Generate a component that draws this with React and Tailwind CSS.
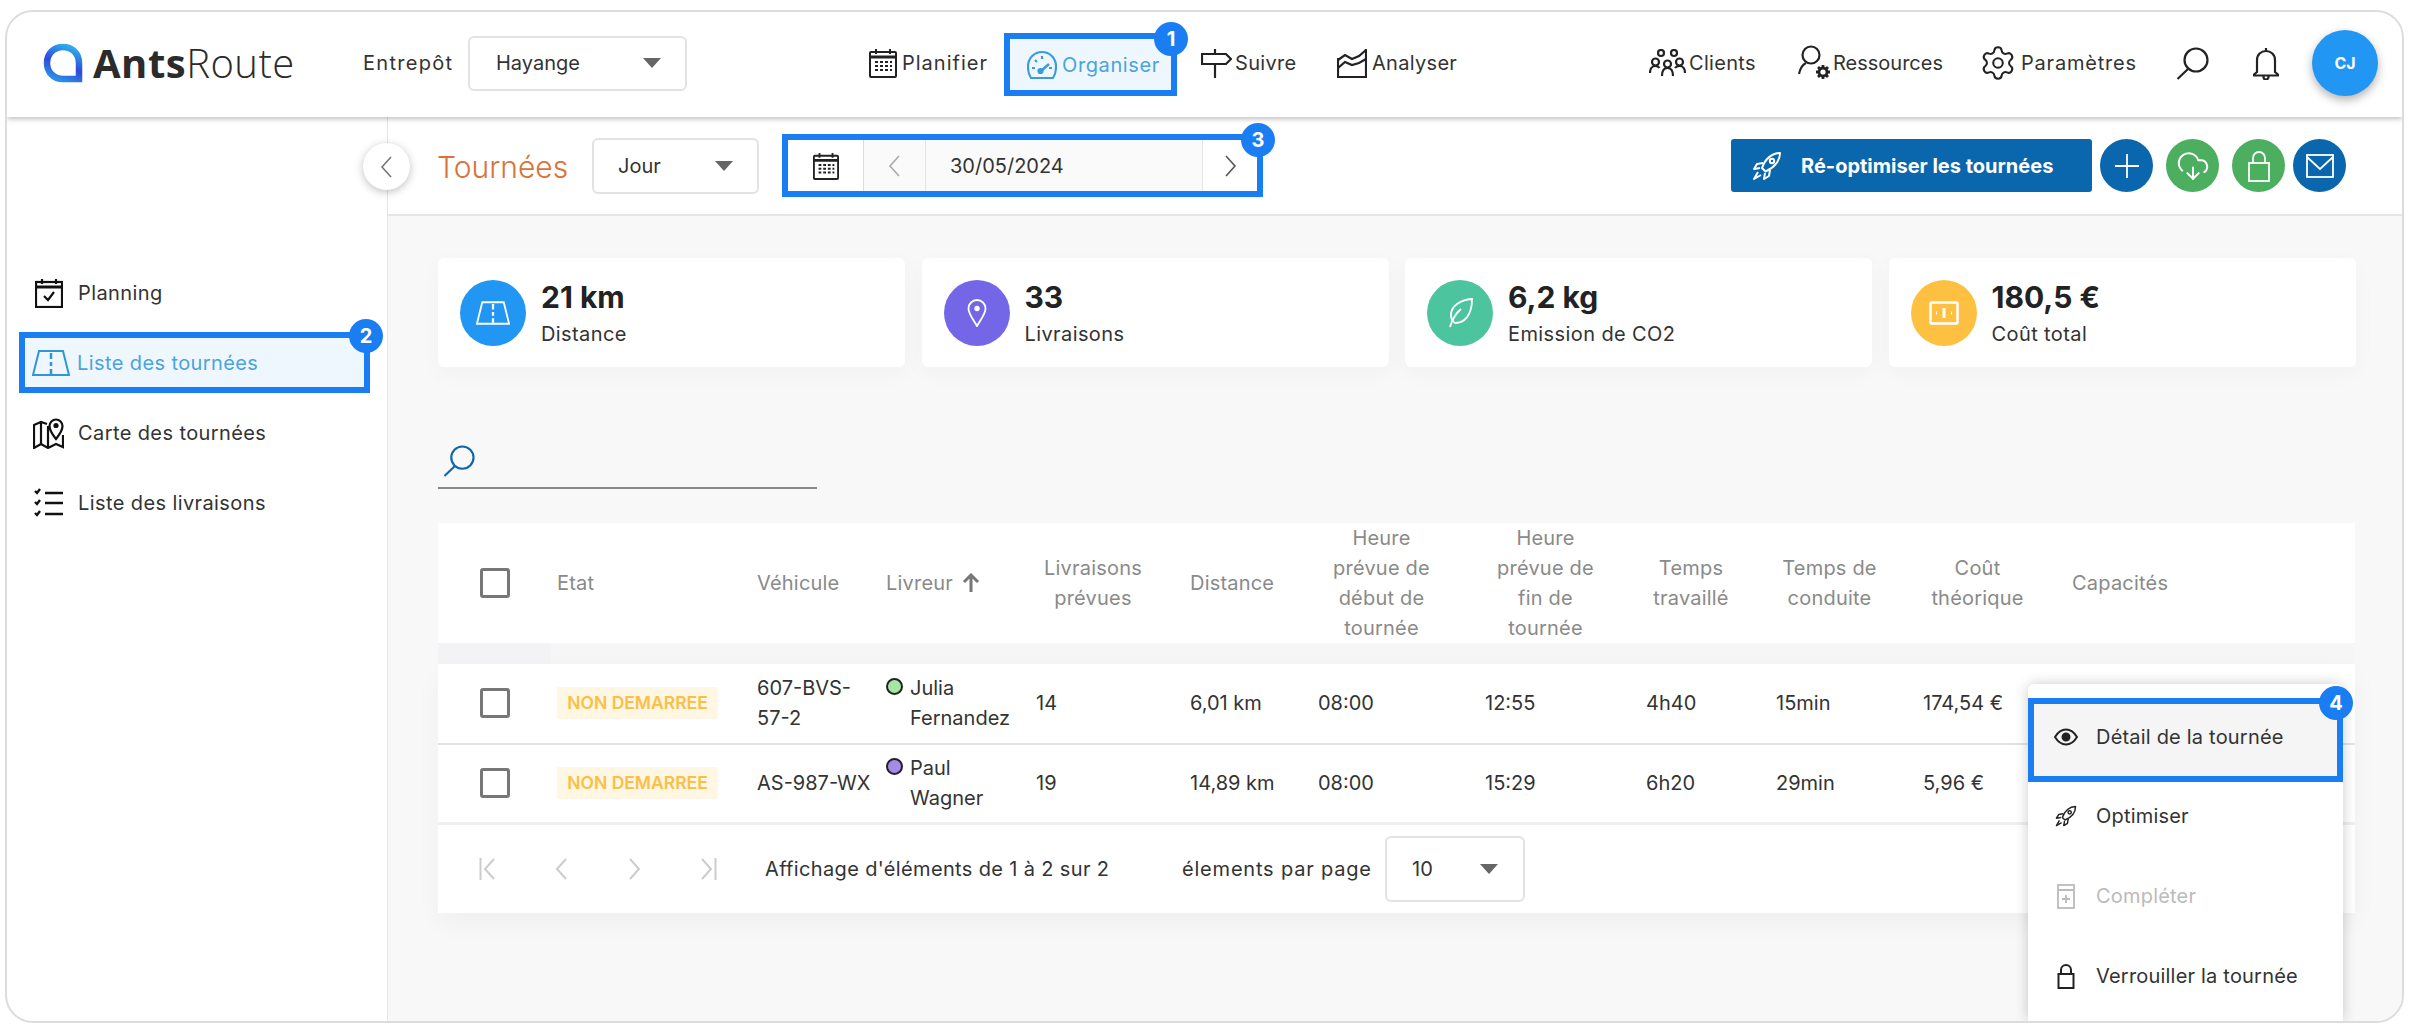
import { CloudDownload, Settings } from "lucide-react";

const FONT = "font-['Inter','Liberation_Sans',sans-serif]";
const COLS =
  "grid grid-cols-[119px_200px_129px_150px_154px_128px_167px_161px_130px_147px_149px_1fr]";

function Arrow() {
  return (
    <div className="w-0 h-0 border-x-[9px] border-x-transparent border-t-[10px] border-t-[#666]" />
  );
}

function Badge({ n, className }) {
  return (
    <div
      className={`absolute w-[34px] h-[34px] rounded-full bg-[#1a7ef2] text-white text-[20px] font-bold flex items-center justify-center z-20 ${className}`}
    >
      {n}
    </div>
  );
}

function Logo() {
  return (
    <svg width="40" height="40" viewBox="0 0 40 40" fill="none">
      <defs>
        <linearGradient id="lg" x1="0.7" y1="0" x2="0.3" y2="1">
          <stop offset="0" stopColor="#2fa8ea" />
          <stop offset="0.55" stopColor="#3048dc" />
          <stop offset="1" stopColor="#2a8fe8" />
        </linearGradient>
      </defs>
      <path
        d="M36 36H20C10.500 36 4 29 4 20C4 10.500 11 4 20 4C29 4 36 10.500 36 20Z"
        stroke="url(#lg)"
        strokeWidth="6.500"
      />
    </svg>
  );
}

function CalendarIcon({ w = 28, h = 30 }) {
  return (
    <svg width={w} height={h} viewBox="0 0 28 30" fill="none" stroke="#222" strokeWidth="2">
      <rect x="1" y="4" width="26" height="25" rx="1" />
      <path d="M1 9h26" strokeWidth="3" />
      <path d="M7 1v5M21 1v5" />
      <path
        d="M6 14h3M11 14h3M16 14h3M21 14h2M6 18h3M11 18h3M16 18h3M21 18h2M6 22h3M11 22h3M16 22h3M21 22h2"
        strokeWidth="2.200"
      />
    </svg>
  );
}

function GaugeIcon() {
  return (
    <svg width="30" height="30" viewBox="0 0 30 30" fill="none" stroke="#3b9bdd" strokeWidth="2.200">
      <path d="M4 28C2 25 1 21 1 16.500C1 8 7.500 2 15 2C22.500 2 29 8 29 16.500C29 21 28 25 26 28Z" />
      <path d="M15 6v3M8 10l2 2M5 18h3M25 18h-3" />
      <path d="M14 21l8-7" strokeWidth="2.500" />
      <circle cx="13.500" cy="21" r="2" fill="#3b9bdd" />
    </svg>
  );
}

function SignIcon() {
  return (
    <svg width="31" height="30" viewBox="0 0 31 30" fill="none" stroke="#222" strokeWidth="2.200">
      <path d="M14 1v5M14 16v14" />
      <path d="M1 6h24l5 5-5 5H1z" />
    </svg>
  );
}

function ChartIcon() {
  return (
    <svg width="30" height="30" viewBox="0 0 30 30" fill="none" stroke="#222" strokeWidth="2.200">
      <path d="M1 10v19h28V1" />
      <path d="M1 12l7-5 7 4 7-3 7-6" />
      <path d="M1 20l7-6 7 3 7-2 7-4" />
    </svg>
  );
}

function ClientsIcon() {
  return (
    <svg width="37" height="28" viewBox="0 0 37 28" fill="none" stroke="#222" strokeWidth="2.200">
      <circle cx="12" cy="4" r="3" />
      <circle cx="25" cy="4" r="3" />
      <circle cx="6.500" cy="13" r="3.500" />
      <circle cx="18.500" cy="15" r="3.500" />
      <circle cx="30.500" cy="13" r="3.500" />
      <path d="M1 24c0-4 2-7 5.500-7 1.500 0 3 .5 4 2M13 27c0-5 2-8 5.500-8s5.500 3 5.500 8M26 19c1-1.500 3-2 4.500-2 3.500 0 5.500 3 5.500 7" />
    </svg>
  );
}

function ResourceIcon() {
  return (
    <svg width="35" height="36" viewBox="0 0 35 36" fill="none" stroke="#222" strokeWidth="2.200">
      <circle cx="13" cy="10" r="8.500" />
      <path d="M8 18C4 20 2 24 1 29" />
      <circle cx="25" cy="27" r="4" strokeWidth="2.800" />
      <path d="M25 20v3M25 31v3M18 27h3M29 27h3M20 22l2 2M28 30l2 2M30 22l-2 2M22 30l-2 2" strokeWidth="2.800" />
    </svg>
  );
}

function SearchIcon({ color = "#222", size = 33 }) {
  return (
    <svg width={size} height={size} viewBox="0 0 33 33" fill="none" stroke={color} strokeWidth="2.200">
      <circle cx="20" cy="13" r="11.500" />
      <path d="M12 22L1.500 32" />
    </svg>
  );
}

function BellIcon() {
  return (
    <svg width="26" height="33" viewBox="0 0 26 33" fill="none" stroke="#222" strokeWidth="2.200">
      <path d="M13 1v3" />
      <path d="M4 25V13C4 7.500 8 4 13 4s9 3.500 9 9v12l3 2.500v1H1v-1z" />
      <path d="M10.500 29v1a2.500 2.500 0 0 0 5 0v-1" />
    </svg>
  );
}

function RocketIcon({ color = "#fff", size = 30 }) {
  return (
    <svg width={size} height={size} viewBox="0 0 30 30" fill="none" stroke={color} strokeWidth="2" strokeLinejoin="round">
      <path d="M28 2C20 2 13 8 10 17l3.500 3.500C22 17 28 10 28 2z" />
      <circle cx="20" cy="10" r="2.200" />
      <path d="M11 12l-6 1-3 5 6-1M18 19l-1 6-5 3 1-6" />
      <path d="M6 21l-4 7 7-4" />
    </svg>
  );
}

function RoadIcon({ color = "#fff", w = 38, h = 26 }) {
  return (
    <svg width={w} height={h} viewBox="0 0 38 26" fill="none" stroke={color} strokeWidth="2">
      <path d="M7 1h24l6 24H1z" />
      <path d="M19 3v6M19 12v4M19 19v5" strokeWidth="2.500" />
    </svg>
  );
}

function Money() {
  return (
    <svg width="30" height="24" viewBox="0 0 30 24" fill="none" stroke="#fff" strokeWidth="2.500">
      <rect x="1.500" y="1.500" width="27" height="21" rx="1" />
      <path d="M15 7v10" strokeWidth="3" />
      <path d="M7 12h1M22 12h1" strokeWidth="3" />
    </svg>
  );
}

function NavItem({ icon, label, className, gap = "gap-[5px]", track = "tracking-[0.3px]" }) {
  return (
    <div className={`flex items-center shrink-0 ${gap} ${className}`}>
      {icon}
      <span className={`text-[20px] text-[#333] ${track}`}>{label}</span>
    </div>
  );
}

function Select({ value, className }) {
  return (
    <div className={`flex items-center justify-between bg-white border-2 border-[#e2e2e2] rounded-[6px] shrink-0 ${className}`}>
      <span className="text-[20px] text-[#333]">{value}</span>
      <Arrow />
    </div>
  );
}

function StatCard({ color, icon, value, label }) {
  return (
    <div className="w-[467px] h-[109px] bg-white rounded-[6px] flex items-center pl-[22px] gap-[15px] shadow-[0_6px_24px_rgba(0,0,0,0.03)]">
      <div className={`w-[66px] h-[66px] rounded-full flex items-center justify-center ${color}`}>{icon}</div>
      <div className="flex flex-col mt-[4px]">
        <span className="text-[30px] leading-[38px] font-bold text-[#222]">{value}</span>
        <span className="text-[20px] leading-[36px] text-[#333] tracking-[0.4px]">{label}</span>
      </div>
    </div>
  );
}

function SideItem({ icon, label, active }) {
  return (
    <div
      className={`relative flex items-center h-[61px] w-[351px] ml-[12px] ${
        active ? "border-[6px] border-[#1a7ef2] bg-[#eef7fe]" : ""
      }`}
    >
      <div className={`flex justify-center ${active ? "w-[52px]" : "w-[59px]"}`}>{icon}</div>
      <span className={`text-[20px] tracking-[0.4px] ${active ? "text-[#4ba3dd]" : "text-[#333]"}`}>{label}</span>
      {active && <Badge n="2" className="-top-[19px] -right-[19px]" />}
    </div>
  );
}

function Head({ children, center }) {
  return (
    <div className={`text-[20px] leading-[30px] tracking-[0.2px] text-[#8a8a8a] flex items-center h-[120px] ${center ? "pr-[40px] justify-center text-center" : ""}`}>
      {children}
    </div>
  );
}

function Check() {
  return <div className="w-[30px] h-[30px] border-[3px] border-[#777] rounded-[3px] ml-[42px]" />;
}

function Row({ vehicle, dot, name, n, dist, start, end, work, drive, cost, border }) {
  return (
    <div className={`${COLS} items-center text-[20px] leading-[30px] text-[#333] h-[81px] ${border}`}>
      <Check />
      <div>
        <span className="inline-block w-[161px] h-[32px] leading-[32px] text-center bg-[#fff6e4] text-[#fbbf45] text-[17.500px] font-semibold rounded-[2px]">
          NON DEMARREE
        </span>
      </div>
      <div className="pr-[8px]">{vehicle}</div>
      <div className="flex gap-[7px] pr-[10px]">
        <span className={`w-[17px] h-[17px] rounded-full border-2 border-[#222] mt-[5px] shrink-0 ${dot}`} />
        <span>{name}</span>
      </div>
      <div>{n}</div>
      <div>{dist}</div>
      <div>{start}</div>
      <div>{end}</div>
      <div>{work}</div>
      <div>{drive}</div>
      <div>{cost}</div>
      <div />
    </div>
  );
}

function MenuItem({ icon, label, muted }) {
  return (
    <div className="flex items-center h-[80px] pl-[26px] gap-[18px]">
      <div className="w-[24px] flex justify-center">{icon}</div>
      <span className={`text-[20px] tracking-[0.2px] ${muted ? "text-[#bbb]" : "text-[#333]"}`}>{label}</span>
    </div>
  );
}

function Chev({ dir = "left", color = "#999", bar, weight = "1.600" }) {
  return (
    <svg width="22" height="24" viewBox="0 0 22 24" fill="none" stroke={color} strokeWidth={weight}>
      {dir === "left" ? <path d="M15 2L6 12l9 10" /> : <path d="M7 2l9 10-9 10" />}
      {bar && <path d={dir === "left" ? "M1.500 1v22" : "M20.500 1v22"} />}
    </svg>
  );
}

export default function App() {
  return (
    <div className={`w-[2410px] h-[1032px] bg-white pt-[10px] pl-[5px] overflow-hidden ${FONT}`}>
      <div className="relative w-[2399px] h-[1013px] border-2 border-[#dcdcdc] rounded-[28px] overflow-hidden flex flex-col bg-white">
        <header className="h-[105px] shrink-0 flex items-center pl-[36px] pb-[3px] bg-white shadow-[0_2px_5px_rgba(0,0,0,0.25)] z-10">
          <div className="w-[320px] flex items-center shrink-0 gap-[10px]">
            <Logo />
            <span className="text-[40px] text-[#2b2b2b] tracking-[0.5px] font-['Open_Sans',sans-serif]">
              <b className="font-bold">Ants</b>
              <span className="font-light">Route</span>
            </span>
          </div>
          <span className="w-[105px] shrink-0 text-[20px] text-[#333] tracking-[1.300px]">Entrepôt</span>
          <Select value="Hayange" className="w-[219px] h-[55px] pl-[26px] pr-[24px]" />
          <div className="ml-[182px] flex items-center">
            <NavItem icon={<CalendarIcon />} label="Planifier" className="w-[135px]" track="tracking-[1px]" />
            <div className="relative w-[173px] h-[63px] mt-[3px] shrink-0 border-[6px] border-[#1a7ef2] bg-[#eef7fe] flex items-center pl-[17px] gap-[5px]">
              <GaugeIcon />
              <span className="text-[20px] text-[#4ba3dd] tracking-[0.6px]">Organiser</span>
              <Badge n="1" className="-top-[17px] -right-[17px]" />
            </div>
            <NavItem icon={<SignIcon />} label="Suivre" className="w-[136px] ml-[24px]" gap="gap-[3px]" />
            <NavItem icon={<ChartIcon />} label="Analyser" className="w-[312px]" />
            <NavItem icon={<ClientsIcon />} label="Clients" className="w-[149px]" gap="gap-[3px]" />
            <NavItem icon={<ResourceIcon />} label="Ressources" className="w-[184px]" gap="gap-0" track="tracking-normal" />
            <NavItem
              icon={<Settings size={38} strokeWidth={1.3} color="#222" className="-mx-[3px]" />}
              label="Paramètres"
              className="w-[194px]"
              gap="gap-[7px]"
              track="tracking-[0.8px]"
            />
            <div className="w-[77px] shrink-0">
              <SearchIcon />
            </div>
            <div className="w-[59px] shrink-0">
              <BellIcon />
            </div>
            <div className="w-[66px] h-[66px] shrink-0 rounded-full bg-[#2196f3] text-white text-[16px] font-bold flex items-center justify-center shadow-[0_4px_10px_rgba(0,0,0,0.3)]">
              CJ
            </div>
          </div>
        </header>

        <div className="flex flex-1 min-h-0">
          <aside className="w-[381px] shrink-0 border-r border-[#e5e5e5] pt-[145px] flex flex-col gap-[9px]">
            <SideItem
              icon={
                <svg width="28" height="30" viewBox="0 0 28 30" fill="none" stroke="#111" strokeWidth="2.200">
                  <rect x="1" y="4" width="26" height="25" />
                  <path d="M1 9h26" strokeWidth="3" />
                  <path d="M7 1v5M21 1v5" />
                  <path d="M9 18l4 4 6-8" />
                </svg>
              }
              label="Planning"
            />
            <SideItem active icon={<RoadIcon color="#2f95da" />} label="Liste des tournées" />
            <SideItem
              icon={
                <svg width="31" height="33" viewBox="0 0 31 33" fill="none" stroke="#111" strokeWidth="2.200">
                  <path d="M14 8L8 6 1 9v23l7-4 7 4 8-4 7 3V19" />
                  <path d="M8 6v22M15 10v22" />
                  <path d="M23 23c-3-4-6.500-8-6.500-13a6.500 6.500 0 0 1 13 0c0 5-3.500 9-6.500 13z" />
                  <circle cx="23" cy="9.500" r="1.500" fill="#111" />
                </svg>
              }
              label="Carte des tournées"
            />
            <SideItem
              icon={
                <svg width="30" height="30" viewBox="0 0 30 30" fill="none" stroke="#111" strokeWidth="2.400">
                  <path d="M1 3l2 2 3-4M1 14l2 2 3-4M1 25l2 2 3-4" />
                  <path d="M11 5h18M11 15h18M11 26h18" />
                </svg>
              }
              label="Liste des livraisons"
            />
          </aside>

          <main className="flex-1 min-w-0 bg-[#f8f8f9] flex flex-col">
            <div className="h-[99px] shrink-0 bg-white border-b-2 border-[#e6e6e6] flex items-center pl-[50px]">
              <span className="-ml-[1px] mt-[3px] w-[155px] shrink-0 text-[30px] font-light text-[#d9733a]">Tournées</span>
              <Select value="Jour" className="w-[167px] h-[56px] pl-[24px] pr-[24px]" />
              <div className="relative ml-[23px] w-[481px] h-[63px] shrink-0 border-[6px] border-[#1a7ef2] flex">
                <div className="w-[76px] flex items-center justify-center border-r border-[#ddd]">
                  <CalendarIcon w={26} h={28} />
                </div>
                <div className="w-[62px] flex items-center justify-center bg-[#fafafa] border-r border-[#e5e5e5]">
                  <Chev color="#aaa" />
                </div>
                <div className="w-[277px] flex items-center pl-[24px] bg-[#fafafa] border-r border-[#e5e5e5] text-[20px] text-[#333]">
                  30/05/2024
                </div>
                <div className="flex-1 flex items-center justify-center">
                  <Chev dir="right" color="#555" />
                </div>
                <Badge n="3" className="-top-[17px] -right-[18px]" />
              </div>
              <div className="ml-[468px] w-[361px] h-[53px] shrink-0 rounded-[3px] bg-[#0b67ad] flex items-center pl-[21px] gap-[19px] text-white text-[20px] font-bold">
                <RocketIcon />
                <span>Ré-optimiser les tournées</span>
              </div>
              <div className="ml-[8px] w-[53px] h-[53px] shrink-0 rounded-full bg-[#0b67ad] flex items-center justify-center">
                <svg width="26" height="26" viewBox="0 0 26 26" stroke="#fff" strokeWidth="1.800">
                  <path d="M13 1v24M1 13h24" />
                </svg>
              </div>
              <div className="ml-[13px] w-[53px] h-[53px] shrink-0 rounded-full bg-[#4caf60] flex items-center justify-center">
                <CloudDownload size={34} strokeWidth={1.4} color="#fff" />
              </div>
              <div className="ml-[13px] w-[53px] h-[53px] shrink-0 rounded-full bg-[#4caf60] flex items-center justify-center">
                <svg width="24" height="32" viewBox="0 0 24 32" fill="none" stroke="#fff" strokeWidth="1.800">
                  <rect x="2" y="13" width="20" height="18" />
                  <path d="M6 13V8a6 6 0 0 1 12 0v5" />
                </svg>
              </div>
              <div className="ml-[8px] w-[53px] h-[53px] shrink-0 rounded-full bg-[#0b67ad] flex items-center justify-center">
                <svg width="28" height="24" viewBox="0 0 28 24" fill="none" stroke="#fff" strokeWidth="1.800">
                  <rect x="1" y="1" width="26" height="22" />
                  <path d="M1 3l13 12L27 3" />
                </svg>
              </div>
            </div>

            <div className="pl-[50px] pt-[42px] flex flex-col">
              <div className="flex gap-[16.500px]">
                <StatCard color="bg-[#2196f3]" icon={<RoadIcon w={34} h={24} />} value="21 km" label="Distance" />
                <StatCard
                  color="bg-[#7367e8]"
                  icon={
                    <svg width="20" height="28" viewBox="0 0 20 28" fill="none" stroke="#fff" strokeWidth="1.800">
                      <path d="M10 27C6 20 1.500 15 1.500 9.500a8.500 8.500 0 0 1 17 0C18.500 15 14 20 10 27z" />
                      <circle cx="10" cy="9.500" r="1.800" fill="#fff" />
                    </svg>
                  }
                  value="33"
                  label="Livraisons"
                />
                <StatCard
                  color="bg-[#4cc59e]"
                  icon={
                    <svg width="28" height="30" viewBox="0 0 28 30" fill="none" stroke="#fff" strokeWidth="1.800">
                      <path d="M26 1C14 2 5 8 5 17c0 3 1 6 4 8 9 0 17-7 17-24z" />
                      <path d="M4 29c2-7 5-13 11-18" />
                    </svg>
                  }
                  value="6,2 kg"
                  label="Emission de CO2"
                />
                <StatCard color="bg-[#fdc040]" icon={<Money />} value="180,5 €" label="Coût total" />
              </div>

              <div className="mt-[78px] w-[379px] pb-[10px] border-b-2 border-[#888] pl-[5px]">
                <SearchIcon color="#0b67ad" size={32} />
              </div>

              <div className="mt-[34px] w-[1917px]">
                <div className={`${COLS} bg-white h-[120px]`}>
                  <div className="flex items-center h-[120px]">
                    <Check />
                  </div>
                  <Head>Etat</Head>
                  <Head>Véhicule</Head>
                  <Head>
                    Livreur
                    <svg className="ml-[9px]" width="18" height="20" viewBox="0 0 18 20" fill="none" stroke="#777" strokeWidth="3">
                      <path d="M9 19V2M2 9l7-7 7 7" />
                    </svg>
                  </Head>
                  <Head center>
                    Livraisons
                    <br />
                    prévues
                  </Head>
                  <Head>Distance</Head>
                  <Head center>
                    Heure
                    <br />
                    prévue de
                    <br />
                    début de
                    <br />
                    tournée
                  </Head>
                  <Head center>
                    Heure
                    <br />
                    prévue de
                    <br />
                    fin de
                    <br />
                    tournée
                  </Head>
                  <Head center>
                    Temps
                    <br />
                    travaillé
                  </Head>
                  <Head center>
                    Temps de
                    <br />
                    conduite
                  </Head>
                  <Head center>
                    Coût
                    <br />
                    théorique
                  </Head>
                  <Head>Capacités</Head>
                </div>
                <div className="h-[21px] bg-[#f6f6f7]">
                  <div className="h-full w-[113px] bg-[#f3f3f5]" />
                </div>
                <div className="bg-white shadow-[0_10px_24px_rgba(0,0,0,0.04)]">
                  <Row
                    vehicle="607-BVS-57-2"
                    dot="bg-[#a5e6a0]"
                    name="Julia Fernandez"
                    n="14"
                    dist="6,01 km"
                    start="08:00"
                    end="12:55"
                    work="4h40"
                    drive="15min"
                    cost="174,54 €"
                    border="border-b-2 border-[#e3e3e3] pb-[2px] -mb-[1px]"
                  />
                  <Row
                    vehicle="AS-987-WX"
                    dot="bg-[#a58be8]"
                    name="Paul Wagner"
                    n="19"
                    dist="14,89 km"
                    start="08:00"
                    end="15:29"
                    work="6h20"
                    drive="29min"
                    cost="5,96 €"
                    border="border-b-[3px] border-[#efefef]"
                  />
                  <div className="h-[88px] flex items-center text-[20px] text-[#333]">
                    <div className="ml-[41px] w-[286px] flex shrink-0">
                      <div className="w-[72px]">
                        <Chev color="#ccc" bar weight="2" />
                      </div>
                      <div className="w-[72px]">
                        <Chev color="#ccc" weight="2" />
                      </div>
                      <div className="w-[72px]">
                        <Chev dir="right" color="#ccc" weight="2" />
                      </div>
                      <Chev dir="right" color="#ccc" bar weight="2" />
                    </div>
                    <span className="w-[417px] shrink-0 tracking-[0.35px]">Affichage d'éléments de 1 à 2 sur 2</span>
                    <span className="w-[203px] shrink-0 tracking-[0.8px]">élements par page</span>
                    <Select value="10" className="w-[140px] h-[66px] pl-[25px] pr-[25px]" />
                  </div>
                </div>
              </div>
            </div>
          </main>
        </div>

        <div className="absolute left-[356px] top-[131px] w-[47px] h-[47px] rounded-full bg-white shadow-[0_2px_8px_rgba(0,0,0,0.25)] flex items-center justify-center z-10">
          <Chev color="#777" />
        </div>

        <div className="absolute left-[2021px] top-[672px] bottom-0 w-[315px] bg-white rounded-t-[6px] shadow-[0_0_14px_rgba(0,0,0,0.2)] z-10 pt-[14px]">
          <div className="relative h-[84px] border-[6px] border-[#1a7ef2] bg-[#f5f5f5] flex items-center pl-[20px] pb-[7px] gap-[18px]">
            <div className="w-[24px] flex justify-center">
              <svg width="24" height="18" viewBox="0 0 24 18" fill="none" stroke="#222" strokeWidth="2">
                <path d="M1 9c3-5 7-7.500 11-7.500S20 4 23 9c-3 5-7 7.500-11 7.500S4 14 1 9z" />
                <circle cx="12" cy="9" r="3.500" fill="#222" />
              </svg>
            </div>
            <span className="text-[20px] text-[#333] tracking-[0.2px]">Détail de la tournée</span>
            <Badge n="4" className="-top-[18px] -right-[16px]" />
          </div>
          <div className="-mt-[6px]">
            <MenuItem icon={<RocketIcon color="#222" size={22} />} label="Optimiser" />
            <MenuItem
              muted
              icon={
                <svg width="18" height="26" viewBox="0 0 18 26" fill="none" stroke="#bbb" strokeWidth="1.800">
                  <rect x="1" y="2" width="16" height="23" />
                  <path d="M1 7h16M9 12v8M5 16h8" />
                </svg>
              }
              label="Compléter"
            />
            <MenuItem
              icon={
                <svg width="18" height="26" viewBox="0 0 18 26" fill="none" stroke="#222" strokeWidth="2">
                  <rect x="1.500" y="11" width="15" height="14" />
                  <path d="M4 11V7a5 5 0 0 1 10 0v4" />
                </svg>
              }
              label="Verrouiller la tournée"
            />
          </div>
        </div>
      </div>
    </div>
  );
}
